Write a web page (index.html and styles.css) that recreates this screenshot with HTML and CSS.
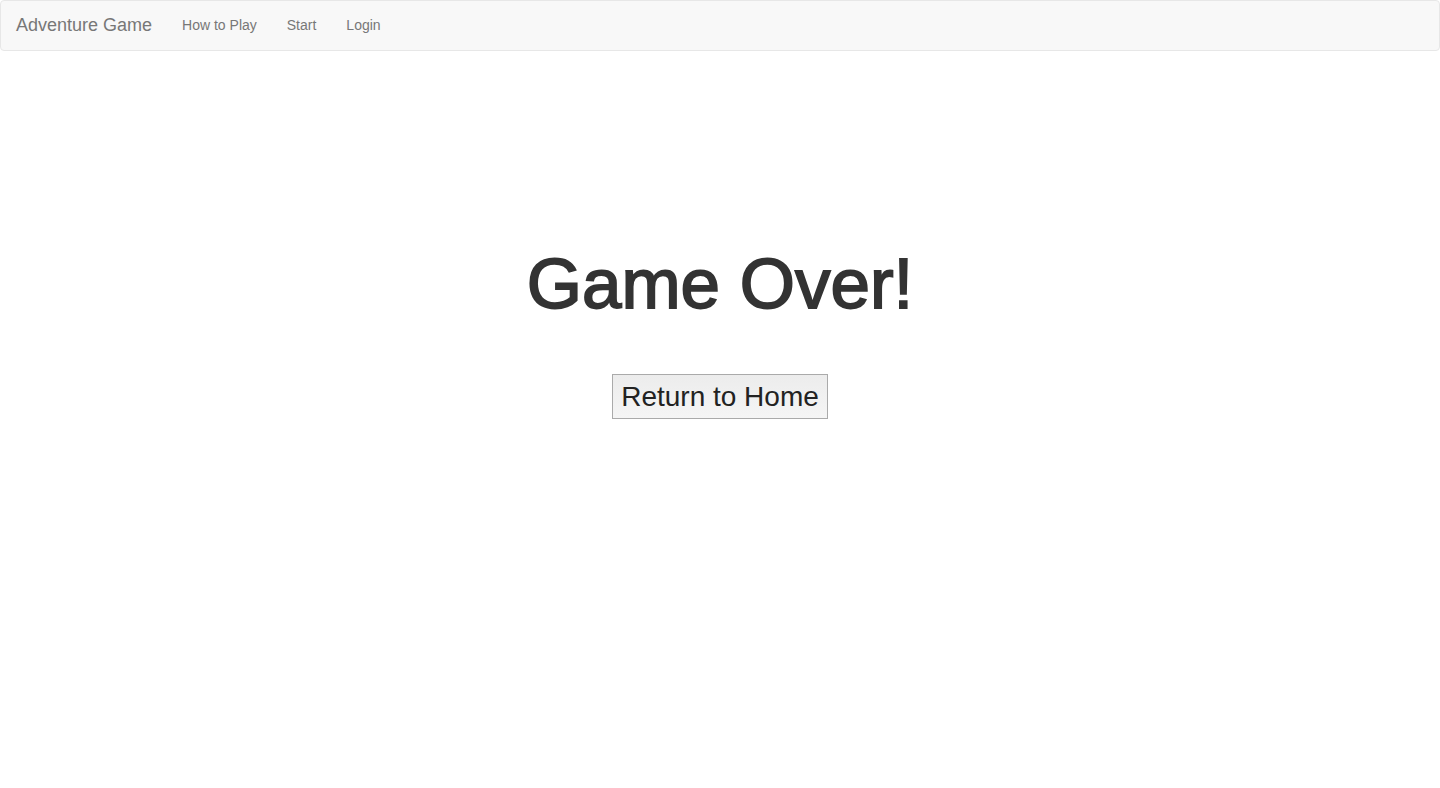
FILE: index.html
```html
<!DOCTYPE html>
<html>
<head>
<meta charset="utf-8">
<link rel="stylesheet" href="styles.css">
</head>
<body>
<nav class="navbar">
  <a class="brand" href="#">Adventure Game</a>
  <ul class="nav">
    <li><a href="#">How to Play</a></li>
    <li><a href="#">Start</a></li>
    <li><a href="#">Login</a></li>
  </ul>
</nav>
<main class="content">
  <h1 class="title">Game Over!</h1>
  <button class="home-btn" type="button">Return to Home</button>
</main>
</body>
</html>
```
FILE: styles.css
```css
* { box-sizing: border-box; }
html, body { margin: 0; padding: 0; }
body {
  font-family: "Liberation Sans", Arial, Helvetica, sans-serif;
  font-size: 14px;
  line-height: 1.42857;
  color: #333;
  background: #fff;
}
.navbar {
  display: flex;
  align-items: center;
  height: 51px;
  padding: 0 0 2px 15px;
  background: #f8f8f8;
  border: 1px solid #e7e7e7;
  border-radius: 4px;
}
.brand {
  font-size: 18px;
  line-height: 20px;
  color: #777;
  text-decoration: none;
  padding: 15px 15px 14px 0;
}
.nav {
  display: flex;
  list-style: none;
  margin: 0;
  padding: 0;
}
.nav a {
  display: block;
  padding: 15px 15px 14px;
  line-height: 20px;
  color: #777;
  text-decoration: none;
}
.content {
  display: flex;
  flex-direction: column;
  align-items: center;
  padding-top: 194px;
}
.title {
  margin: 0;
  font-size: 71px;
  font-weight: 400;
  line-height: 1.1;
  color: #333;
  -webkit-text-stroke: 1.8px #333;
}
.home-btn {
  margin-top: 51px;
  font-family: "Liberation Sans", Arial, Helvetica, sans-serif;
  font-size: 28px;
  line-height: 40px;
  color: #222;
  padding: 2px 8px 1px;
  border: 1px solid #aaa;
  border-radius: 0;
  background: linear-gradient(#ececec, #f5f5f5);
}
```
